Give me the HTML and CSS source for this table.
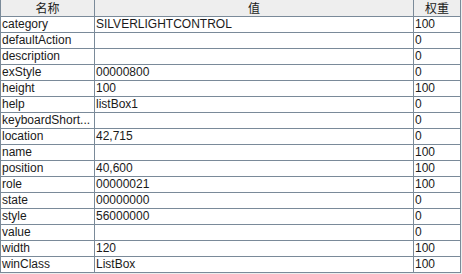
FILE: index.html
```html
<!DOCTYPE html>
<html>
<head>
<meta charset="utf-8">
<link rel="stylesheet" href="styles.css">
</head>
<body>
<div class="grid">
  <div class="hd">名称</div><div class="hd">值</div><div class="hd">权重</div>
  <div class="c">category</div><div class="c">SILVERLIGHTCONTROL</div><div class="c">100</div>
  <div class="c">defaultAction</div><div class="c"></div><div class="c">0</div>
  <div class="c">description</div><div class="c"></div><div class="c">0</div>
  <div class="c">exStyle</div><div class="c">00000800</div><div class="c">0</div>
  <div class="c">height</div><div class="c">100</div><div class="c">100</div>
  <div class="c">help</div><div class="c">listBox1</div><div class="c">0</div>
  <div class="c">keyboardShort...</div><div class="c"></div><div class="c">0</div>
  <div class="c">location</div><div class="c">42,715</div><div class="c">0</div>
  <div class="c">name</div><div class="c"></div><div class="c">100</div>
  <div class="c">position</div><div class="c">40,600</div><div class="c">100</div>
  <div class="c">role</div><div class="c">00000021</div><div class="c">100</div>
  <div class="c">state</div><div class="c">00000000</div><div class="c">0</div>
  <div class="c">style</div><div class="c">56000000</div><div class="c">0</div>
  <div class="c">value</div><div class="c"></div><div class="c">0</div>
  <div class="c">width</div><div class="c">120</div><div class="c">100</div>
  <div class="c">winClass</div><div class="c">ListBox</div><div class="c">100</div>
</div>
</body>
</html>
```
FILE: styles.css
```css
html, body {
  margin: 0;
  padding: 0;
  background: #eeeeee;
}
body {
  font-family: "Liberation Sans", "Noto Sans CJK SC", sans-serif;
  font-size: 12px;
  color: #1a1a1a;
}
.grid {
  display: grid;
  width: 461px;
  box-sizing: border-box;
  grid-template-columns: 93px 318px 46px;
  grid-template-rows: 16px;
  grid-auto-rows: 15px;
  gap: 1px;
  padding: 0 1px 1px 1px;
  background: #7a8a99;
}
.hd {
  background: #eeeeee;
  text-align: center;
  line-height: 16px;
  white-space: nowrap;
  font-family: "Noto Sans CJK SC", sans-serif;
  font-size: 12px;
}
.c {
  background: #ffffff;
  line-height: 15px;
  padding-left: 1px;
  white-space: nowrap;
  overflow: hidden;
}
```
